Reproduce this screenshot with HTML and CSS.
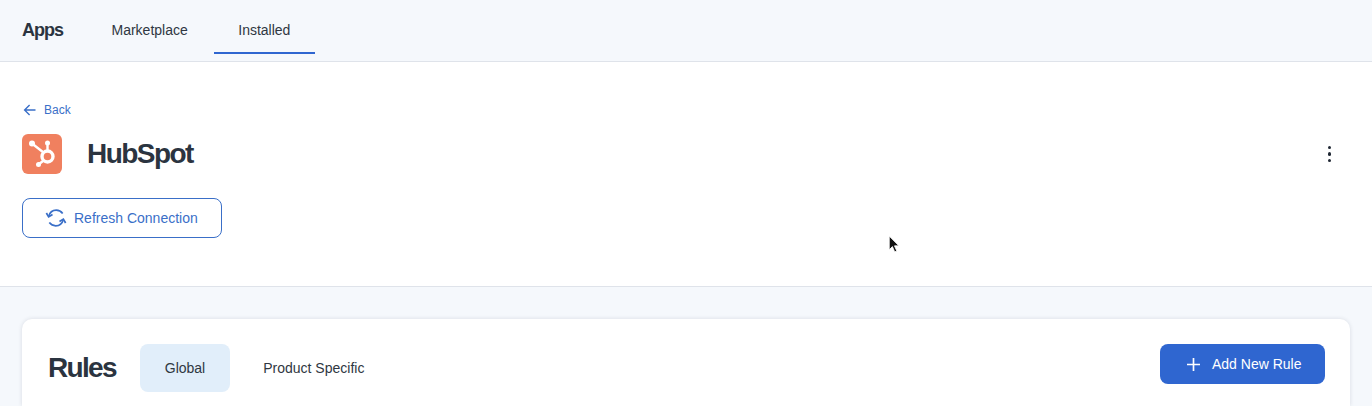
FILE: index.html
```html
<!DOCTYPE html>
<html lang="en">
<head>
<meta charset="utf-8">
<title>HubSpot - Apps</title>
<link rel="stylesheet" href="styles.css">
</head>
<body>
<header class="topbar">
  <h1 class="app-title">Apps</h1>
  <nav class="tabs">
    <a class="tab">Marketplace</a>
    <a class="tab tab-active">Installed</a>
  </nav>
</header>
<section class="detail">
  <a class="back">
    <svg class="back-icon" viewBox="0 0 14 14" width="14" height="14"><path d="M12.500 7H1.800M6.600 2 1.600 7l5 5" fill="none" stroke="currentColor" stroke-width="1.400"/></svg>
    <span>Back</span>
  </a>
  <div class="title-row">
    <div class="logo">
      <svg viewBox="0 0 40 40" width="40" height="40">
        <g fill="none" stroke="#fff" stroke-width="2.400">
          <circle cx="25.500" cy="22.500" r="5.500" stroke-width="3.400"/>
          <path d="M10 9.500 21.500 18.500M25.500 9v8M21 27l-4.500 3.500"/>
        </g>
        <g fill="#fff">
          <circle cx="10" cy="9.500" r="3"/>
          <circle cx="25.500" cy="9" r="2.500"/>
          <circle cx="16.500" cy="30.500" r="2.500"/>
        </g>
      </svg>
    </div>
    <h2 class="product">HubSpot</h2>
    <button class="more" aria-label="More">
      <span class="dot"></span><span class="dot"></span><span class="dot"></span>
    </button>
  </div>
  <button class="refresh">
    <svg viewBox="0 0 24 24" width="22" height="22"><g fill="none" stroke="currentColor" stroke-width="1.900"><path d="M4 10.500C5 6.500 8.300 3.500 12.300 3.500c3 0 5.300 1.300 7 3.500"/><path d="M20 13.500c-1 4-4.300 7-8.300 7-3 0-5.300-1.300-7-3.500"/><path d="M1.500 6.500 4 10.800l4.200-2.600"/><path d="M22.500 17.500 20 13.200l-4.200 2.600"/></g></svg>
    <span>Refresh Connection</span>
  </button>
</section>
<main class="content">
  <div class="card">
    <h2 class="card-title">Rules</h2>
    <div class="pills">
      <a class="pill pill-active">Global</a>
      <a class="pill">Product Specific</a>
    </div>
    <button class="add">
      <svg viewBox="0 0 14 14" width="13" height="13"><path d="M7 0v14M0 7h14" fill="none" stroke="#fff" stroke-width="1.800"/></svg>
      <span>Add New Rule</span>
    </button>
  </div>
</main>
<svg class="cursor" viewBox="0 0 12 18" width="13" height="19"><path d="M1 1v13l3-3 2.200 5 2-.9L6 10.300h4.200z" fill="#111" stroke="#fff" stroke-width=".8"/></svg>
</body>
</html>
```
FILE: styles.css
```css
* { box-sizing: border-box; }
html, body { margin: 0; height: 100%; overflow: hidden; }
body {
  display: flex;
  flex-direction: column;
  background: #f5f8fc;
  color: #2b3440;
  font-family: "Liberation Sans", Arial, sans-serif;
  position: relative;
}
h1, h2 { margin: 0; }
.topbar {
  height: 62px;
  flex: none;
  display: flex;
  align-items: stretch;
  padding-left: 22px;
  background: #f5f8fc;
  border-bottom: 1px solid #dfe3ea;
}
.app-title {
  font-size: 18px;
  font-weight: 700;
  letter-spacing: -1px;
  line-height: 60px;
  color: #2b3440;
}
.tabs { display: flex; margin-left: 24.500px; }
.tab {
  display: block;
  height: 54px;
  padding: 0 26px 0 24px;
  font-size: 14px;
  line-height: 61px;
  color: #2f3742;
}
.tab-active {
  padding: 0 24.500px;
  border-bottom: 2px solid #2f66d0;
}
.detail {
  height: 225px;
  flex: none;
  padding: 40px 22px 0;
  background: #fff;
  border-bottom: 1px solid #dfe3ea;
}
.back {
  display: flex;
  align-items: center;
  gap: 7px;
  height: 16px;
  font-size: 12px;
  color: #3a6fc8;
  margin-left: 1px;
}
.title-row {
  display: flex;
  align-items: center;
  margin-top: 16px;
}
.logo {
  width: 40px;
  height: 40px;
  border-radius: 6px;
  background: #f0805f;
  flex: none;
}
.logo svg { display: block; }
.product {
  margin-left: 25px;
  font-size: 28px;
  font-weight: 700;
  letter-spacing: -1.550px;
  color: #2b3440;
}
.more {
  margin-left: auto;
  margin-right: 19px;
  padding: 0;
  border: 0;
  background: none;
  display: flex;
  flex-direction: column;
  gap: 3px;
}
.dot {
  width: 3.500px;
  height: 3.500px;
  border-radius: 50%;
  background: #1f2733;
}
.refresh {
  display: flex;
  align-items: center;
  gap: 7px;
  width: 199.500px;
  height: 40px;
  margin-top: 24px;
  padding: 0 0 0 22px;
  background: #fff;
  border: 1px solid #3a6fc8;
  border-radius: 8px;
  color: #3a6fc8;
  font: 14px "Liberation Sans", Arial, sans-serif;
}
.content {
  flex: 1;
  display: flex;
  flex-direction: column;
  min-height: 0;
  padding: 32px 22px 0;
}
.card {
  flex: 1;
  display: flex;
  align-items: flex-start;
  padding: 25px 25px 0 26px;
  background: #fff;
  border-radius: 10px 10px 0 0;
  box-shadow: 0 0 4px rgba(40, 50, 70, .14);
}
.card-title {
  font-size: 28px;
  font-weight: 700;
  letter-spacing: -1.700px;
  line-height: 48px;
  color: #2b3440;
}
.pills { display: flex; margin-left: 24px; }
.pill {
  height: 48px;
  padding: 0 25px;
  border-radius: 8px;
  font-size: 14px;
  line-height: 48px;
  color: #2f3742;
}
.pill + .pill { margin-left: 8px; }
.pill-active { background: #e1eefa; }
.add {
  display: flex;
  align-items: center;
  gap: 12px;
  width: 165px;
  height: 40px;
  margin-left: auto;
  padding: 0 0 0 27px;
  border: 0;
  border-radius: 8px;
  background: #2f66d0;
  color: #fff;
  font: 14px "Liberation Sans", Arial, sans-serif;
}
.cursor { position: absolute; left: 888px; top: 235px; }
```
